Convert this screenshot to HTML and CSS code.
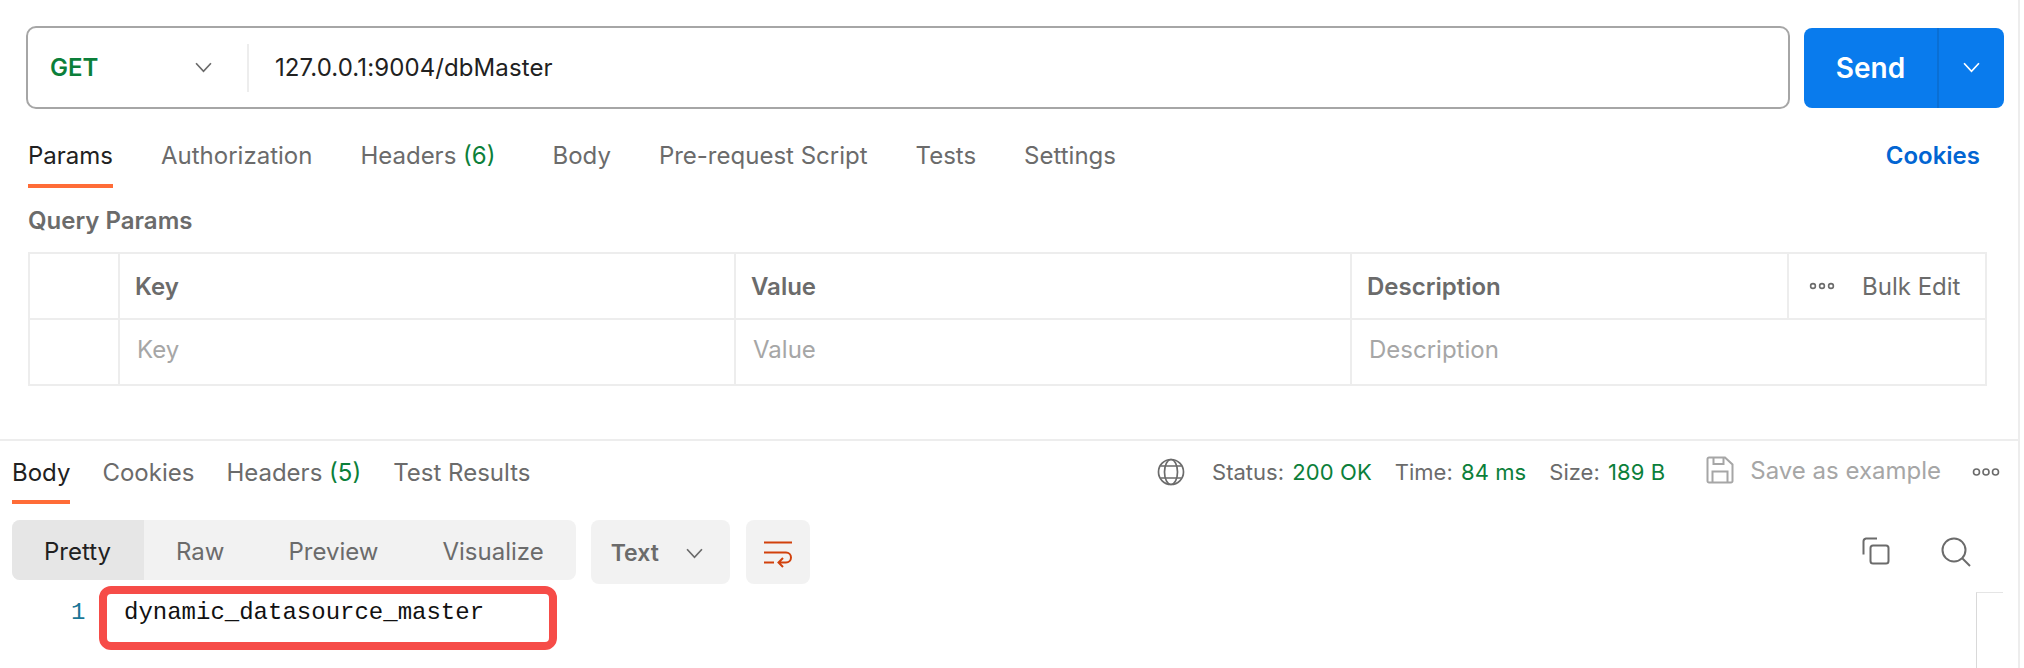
FILE: index.html
```html
<!DOCTYPE html>
<html lang="en">
<head>
<meta charset="utf-8">
<title>dbMaster</title>
<link rel="stylesheet" href="styles.css">
</head>
<body>
<main class="app">
  <section class="request">
    <div class="url-row">
      <div class="url-box">
        <div class="method"><span class="get">GET</span>
          <svg class="chev" viewBox="0 0 16 10"><path d="M1 1l7 7.5L15 1"/></svg>
        </div>
        <div class="url">127.0.0.1:9004/dbMaster</div>
      </div>
      <div class="send">
        <span class="send-label">Send</span>
        <span class="send-more"><svg class="chev white" viewBox="0 0 16 10"><path d="M1 1l7 7.5L15 1"/></svg></span>
      </div>
    </div>
    <nav class="tabs req-tabs">
      <span class="tab active">Params</span>
      <span class="tab">Authorization</span>
      <span class="tab tab-wide">Headers <em>(6)</em></span>
      <span class="tab">Body</span>
      <span class="tab">Pre-request Script</span>
      <span class="tab">Tests</span>
      <span class="tab">Settings</span>
      <span class="cookies">Cookies</span>
    </nav>
    <h2 class="qp">Query Params</h2>
    <div class="grid">
      <div class="cell"></div>
      <div class="cell head">Key</div>
      <div class="cell head">Value</div>
      <div class="cell head">Description</div>
      <div class="cell bulk">
        <svg class="dots" viewBox="0 0 26 8"><circle cx="4" cy="4" r="2.4"/><circle cx="13" cy="4" r="2.4"/><circle cx="22" cy="4" r="2.4"/></svg>
        <span>Bulk Edit</span>
      </div>
      <div class="cell last"></div>
      <div class="cell last ph">Key</div>
      <div class="cell last ph">Value</div>
      <div class="cell last ph span2">Description</div>
    </div>
  </section>

  <section class="response">
    <div class="res-head">
      <nav class="tabs res-tabs">
        <span class="tab active">Body</span>
        <span class="tab">Cookies</span>
        <span class="tab">Headers <em>(5)</em></span>
        <span class="tab">Test Results</span>
      </nav>
      <div class="status">
        <svg class="globe" viewBox="0 0 28 28"><circle cx="14" cy="14" r="12.5"/><ellipse cx="14" cy="14" rx="6.5" ry="12.5"/><path d="M3.5 8h21M3.5 20h21"/></svg>
        <span class="st">Status: <b>200 OK</b></span>
        <span class="st">Time: <b>84 ms</b></span>
        <span class="st">Size: <b>189 B</b></span>
        <span class="save">
          <svg class="floppy" viewBox="0 0 28 28"><path d="M1.5 3a1.5 1.5 0 0 1 1.5-1.500h16l7.500 7V25a1.500 1.500 0 0 1-1.500 1.500H3A1.500 1.500 0 0 1 1.500 25zM7.500 1.500v6.500h10V1.500M6.500 26.500V15.500h15v11"/></svg>
          <span>Save as example</span>
        </span>
        <svg class="dots rdots" viewBox="0 0 28 8"><circle cx="4.500" cy="4" r="3"/><circle cx="14" cy="4" r="3"/><circle cx="23.500" cy="4" r="3"/></svg>
      </div>
    </div>
    <div class="toolbar">
      <div class="seg">
        <span class="seg-item on">Pretty</span>
        <span class="seg-item">Raw</span>
        <span class="seg-item">Preview</span>
        <span class="seg-item">Visualize</span>
      </div>
      <div class="fmt"><span>Text</span><svg class="chev" viewBox="0 0 16 10"><path d="M1 1l7 7.500L15 1"/></svg></div>
      <div class="wrap"><svg viewBox="0 0 28 22"><path d="M0 1.500h28M0 11.500h22a5 5 0 0 1 0 10H15M0 21.500h10M19 17l-4.500 4.500 4.500 4.500"/></svg></div>
      <div class="tools">
        <svg class="ico" viewBox="0 0 28 28"><path d="M15 1.500H4A3 3 0 0 0 1.500 4.500v13"/><rect x="8.500" y="8.500" width="18" height="18" rx="2.500"/></svg>
        <svg class="ico search" viewBox="0 0 30 30"><circle cx="13" cy="13" r="11.500"/><path d="M21 21l8 8"/></svg>
      </div>
    </div>
    <div class="code">
      <span class="ln">1</span>
      <code>dynamic_datasource_master</code>
      <div class="mark"></div>
      <div class="minimap"></div>
    </div>
  </section>
</main>
</body>
</html>
```

FILE: styles.css
```css
* { box-sizing: border-box; }
html, body { margin: 0; height: 100%; background: #fff; }
body { overflow: hidden; font-family: Inter, "Noto Sans", sans-serif; font-size: 24px; color: #6b6b6b; }
.app { width: 2020px; height: 668px; border-right: 2px solid #ededed; }

.request { height: 439px; padding: 26px 0 0 26px; }
.url-row { display: flex; align-items: center; gap: 14px; height: 83px; }
.url-box { width: 1764px; height: 83px; display: flex; align-items: center; border: 2px solid #a6a6a6; border-radius: 10px; }
.method { width: 221px; height: 48px; padding: 0 35px 0 22px; display: flex; align-items: center; justify-content: space-between; border-right: 2px solid #ededed; }
.get { color: #0b7f3a; font-weight: 600; font-size: 24px; }
.chev { width: 17px; height: 11px; fill: none; stroke: #6b6b6b; stroke-width: 1.6; }
.chev.white { stroke: #fff; }
.url { margin-left: 26px; color: #212121; letter-spacing: 0.1px; }
.send { width: 200px; height: 80px; display: flex; background: #097bed; border-radius: 8px; color: #fff; font-weight: 600; }
.send-label { width: 135px; display: flex; align-items: center; justify-content: center; border-right: 2px solid #0a6fd4; font-size: 28px; }
.send-more { flex: 1; display: flex; align-items: center; justify-content: center; }

.tabs { display: flex; }
.tab { position: relative; white-space: nowrap; }
.tab em { font-style: normal; color: #0b7f3a; }
.tab.active { color: #212121; }
.tab.active::after { content: ""; position: absolute; left: 0; right: 0; height: 4px; background: #ff6c37; }
.req-tabs { height: 79px; padding: 31px 38px 0 2px; gap: 48px; align-items: flex-start; line-height: 32px; }
.req-tabs .tab.active::after { top: 44px; }
.tab-wide { margin-right: 9px; }
.cookies { margin-left: auto; color: #0265d2; font-weight: 600; }
.qp { margin: 17px 0 0 2px; height: 47px; font-size: 24px; font-weight: 600; line-height: 32px; color: #6b6b6b; }

.grid { display: grid; width: 1959px; grid-template-columns: 90px 616px 616px 437px 1fr; margin-left: 2px; border: solid #ededed; border-width: 2px 2px 0 2px; }
.cell { height: 66px; display: flex; align-items: center; padding-left: 15px; border-right: 2px solid #ededed; border-bottom: 2px solid #ededed; }
.cell:nth-child(5), .cell.span2 { border-right: 0; }
.head { font-weight: 600; font-size: 24px; color: #6b6b6b; }
.ph { color: #a6a6a6; padding-left: 17px; padding-bottom: 5px; }
.span2 { grid-column: span 2; }
.bulk { gap: 27px; padding-left: 20px; }
.dots { width: 26px; height: 8px; fill: none; stroke: #6b6b6b; stroke-width: 1.6; }

.response { border-top: 2px solid #ededed; padding: 0 0 0 12px; }
.res-head { display: flex; justify-content: space-between; height: 63px; }
.res-tabs { gap: 32px; padding: 16px 0 0; line-height: 32px; }
.res-tabs .tab.active::after { top: 43px; }
.status { display: flex; align-items: center; padding: 0 18px 0 0; height: 61px; font-size: 22px; }
.globe { width: 28px; height: 28px; fill: none; stroke: #6b6b6b; stroke-width: 1.7; margin-right: 27px; }
.st { margin-right: 23px; white-space: nowrap; }
.st b { font-weight: 400; color: #0b7f3a; margin-left: 2px; letter-spacing: 0.1px; }
.save { display: flex; align-items: center; gap: 16px; margin-left: 18px; color: #a6a6a6; font-size: 24px; margin-top: -3px; }
.floppy { width: 28px; height: 28px; fill: none; stroke: #a6a6a6; stroke-width: 2; }
.rdots { width: 28px; margin-left: 31px; }

.toolbar { display: flex; align-items: flex-start; margin-top: 16px; height: 64px; }
.seg { display: flex; height: 60px; background: #f2f2f2; border-radius: 8px; overflow: hidden; }
.seg-item { padding: 2px 32px 0; display: flex; align-items: center; }
.seg-item.on { background: #e6e6e6; color: #212121; padding: 2px 33px 0 32px; }
.fmt { width: 139px; height: 64px; margin-left: 15px; padding: 2px 27px 0 20px; display: flex; align-items: center; justify-content: space-between; background: #f2f2f2; border-radius: 8px; font-weight: 600; font-size: 23px; }
.wrap { width: 64px; height: 64px; margin-left: 16px; display: flex; align-items: center; justify-content: center; background: #f2f2f2; border-radius: 8px; }
.wrap svg { width: 28px; height: 22px; fill: none; stroke: #d1410c; stroke-width: 2; overflow: visible; }
.tools { display: flex; gap: 51px; margin-left: auto; margin-right: 47px; margin-top: 17px; }
.ico { width: 28px; height: 28px; fill: none; stroke: #6b6b6b; stroke-width: 2; }
.ico.search { width: 30px; height: 30px; }

.code { position: relative; height: 82px; }
.ln { position: absolute; left: 59px; top: 11px; line-height: 36px; color: #1a7696; font-family: "Liberation Mono", monospace; }
code { position: absolute; left: 112px; top: 11px; line-height: 36px; color: #111; font-family: "Liberation Mono", monospace; font-size: 24px; }
.mark { position: absolute; left: 87px; top: 2px; width: 458px; height: 64px; border: 8px solid #f64c48; border-radius: 12px; }
.minimap { position: absolute; left: 1964px; top: 8px; width: 27px; height: 80px; border-top: 1px solid #e5e5e5; border-left: 1px solid #d9d9d9; }
```
